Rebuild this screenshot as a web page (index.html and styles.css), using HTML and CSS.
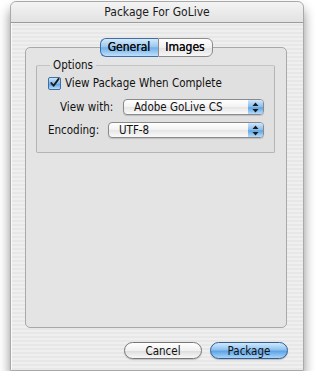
FILE: index.html
```html
<!DOCTYPE html>
<html>
<head>
    <title>Package For GoLive</title>
    <link rel="stylesheet" href="styles.css">
</head>
<body>
    <div class="window">
        <div class="titlebar">Package For GoLive</div>

        <div class="content">
            <div class="tabs">
                <div class="tab selected">General</div>
                <div class="tab">Images</div>
            </div>

            <div class="panel">
                <fieldset class="group">
                    <legend>Options</legend>

                    <label class="check-row">
                        <span class="checkbox">
                            <svg width="12" height="12" viewBox="0 0 12 12">
                                <path d="M2.5 6 L5 9 L10.5 1.5" fill="none" stroke="#1a1a1a" stroke-width="2" stroke-linecap="round" stroke-linejoin="round"/>
                            </svg>
                        </span>
                        View Package When Complete
                    </label>

                    <div class="field-row view-row">
                        <span class="field-label">View with:</span>
                        <div class="popup view-popup">
                            <span class="popup-text">Adobe GoLive CS</span>
                            <span class="popup-arrows">
                                <svg width="7" height="11" viewBox="0 0 7 11">
                                    <path d="M3.5 0.5 L6.5 4 L0.5 4 Z M3.5 10.5 L6.5 7 L0.5 7 Z" fill="#1a1a1a"/>
                                </svg>
                            </span>
                        </div>
                    </div>

                    <div class="field-row enc-row">
                        <span class="field-label">Encoding:</span>
                        <div class="popup enc-popup">
                            <span class="popup-text">UTF-8</span>
                            <span class="popup-arrows">
                                <svg width="7" height="11" viewBox="0 0 7 11">
                                    <path d="M3.5 0.5 L6.5 4 L0.5 4 Z M3.5 10.5 L6.5 7 L0.5 7 Z" fill="#1a1a1a"/>
                                </svg>
                            </span>
                        </div>
                    </div>
                </fieldset>
            </div>

            <div class="buttons">
                <div class="button">Cancel</div>
                <div class="button default">Package</div>
            </div>
        </div>
    </div>
</body>
</html>
```

FILE: styles.css
```css
body {
    margin: 0;
    padding: 0;
    background-color: #fff;
    font-family: "DejaVu Sans Condensed", "DejaVu Sans", sans-serif;
    font-stretch: condensed;
    font-size: 11.5px;
    color: #111;
}
.window {
    margin: 1px 0 0 10px;
    width: 294px;
    height: 370px;
    box-sizing: border-box;
    border: 1px solid #a9a9a9;
    border-radius: 6px 6px 0 0;
    background: repeating-linear-gradient(#efefef 0, #efefef 2px, #e7e7e7 2px, #e7e7e7 4px);
    box-shadow: 0 8px 12px rgba(0,0,0,0.45), inset 1px 0 0 #fafafa;
    display: flex;
    flex-direction: column;
}
.titlebar {
    height: 20px;
    line-height: 20px;
    text-align: center;
    font-size: 12px;
    color: #1a1a1a;
    border-bottom: 1px solid #9c9c9c;
    border-radius: 6px 6px 0 0;
    background: linear-gradient(#f4f4f4, #e2e2e2);
}
.content {
    flex: 1;
    padding: 15px 16px 0 14px;
    display: flex;
    flex-direction: column;
}
.tabs {
    display: flex;
    justify-content: center;
    margin-bottom: -10px;
    position: relative;
    z-index: 1;
}
.tab {
    height: 17px;
    line-height: 17px;
    font-size: 12px;
    text-align: center;
    text-shadow: 0 0 0.4px #000;
    border: 1px solid #8c8c8c;
    background: linear-gradient(#ffffff, #f0f0f0 50%, #e2e2e2 51%, #f6f6f6);
}
.tab:first-child {
    width: 57px;
    border-radius: 6px 0 0 6px;
    border-right: none;
}
.tab:last-child {
    width: 53px;
    border-radius: 0 6px 6px 0;
}
.tab.selected {
    border-color: #3f6ea6;
    background: linear-gradient(#d5e9fb, #9bc8f0 45%, #72afe8 52%, #bfe0fc);
}
.panel {
    height: 281px;
    box-sizing: border-box;
    border: 1px solid #a8a8a8;
    border-radius: 5px;
    background-color: #e4e4e4;
    padding: 10px 11px 0 10px;
}
.group {
    margin: 0;
    padding: 2px 0 0 11px;
    height: 95px;
    box-sizing: border-box;
    border: 1px solid #b4b4b4;
    border-top-color: #c4c4c4;
    border-radius: 2px;
    background-color: #e0e0e0;
}
.group legend {
    padding: 0 3px;
    margin-left: 2px;
    font-size: 11.5px;
}
.check-row {
    display: flex;
    align-items: center;
    height: 14px;
    margin-top: 2px;
}
.checkbox {
    width: 11px;
    height: 11px;
    margin-right: 4px;
    border: 1px solid #3f6ea6;
    border-radius: 2px;
    background: linear-gradient(#cfe6fb, #7fb8ea 50%, #5aa2e3 55%, #b9dcfa);
    display: flex;
    align-items: center;
    justify-content: center;
}
.field-row {
    display: flex;
    align-items: center;
}
.view-row {
    margin: 9px 0 0 12px;
}
.enc-row {
    margin: 7px 0 0 0;
}
.field-label {
    flex: none;
}
.view-row .field-label {
    width: 63px;
}
.enc-row .field-label {
    width: 60px;
}
.popup {
    height: 16px;
    box-sizing: border-box;
    border: 1px solid #8a8a8a;
    border-radius: 4px;
    display: flex;
    align-items: stretch;
    background: linear-gradient(#ffffff, #f2f2f2 50%, #e6e6e6 52%, #fafafa);
    box-shadow: 0 1px 1px rgba(0,0,0,0.15);
}
.view-popup {
    width: 141px;
}
.enc-popup {
    width: 156px;
}
.popup-text {
    flex: 1;
    padding-left: 10px;
    line-height: 14px;
}
.popup-arrows {
    width: 15px;
    border-radius: 0 3px 3px 0;
    background: linear-gradient(#cfe6fb, #86bcec 50%, #5ea5e4 55%, #b6dbfa);
    display: flex;
    align-items: center;
    justify-content: center;
}
.buttons {
    display: flex;
    justify-content: flex-end;
    gap: 8px;
    margin: 14px -1px 0 0;
}
.button {
    width: 78px;
    height: 17px;
    line-height: 16px;
    box-sizing: border-box;
    text-align: center;
    border: 1px solid #777;
    border-radius: 9px;
    background: linear-gradient(#ffffff, #f0f0f0 50%, #dedede 55%, #f8f8f8);
    box-shadow: 0 1px 1px rgba(0,0,0,0.2);
}
.button.default {
    border-color: #2f5d94;
    background: linear-gradient(#d2e8fc, #8ec2f0 45%, #5ea3e6 55%, #a8d6fc);
}
```
